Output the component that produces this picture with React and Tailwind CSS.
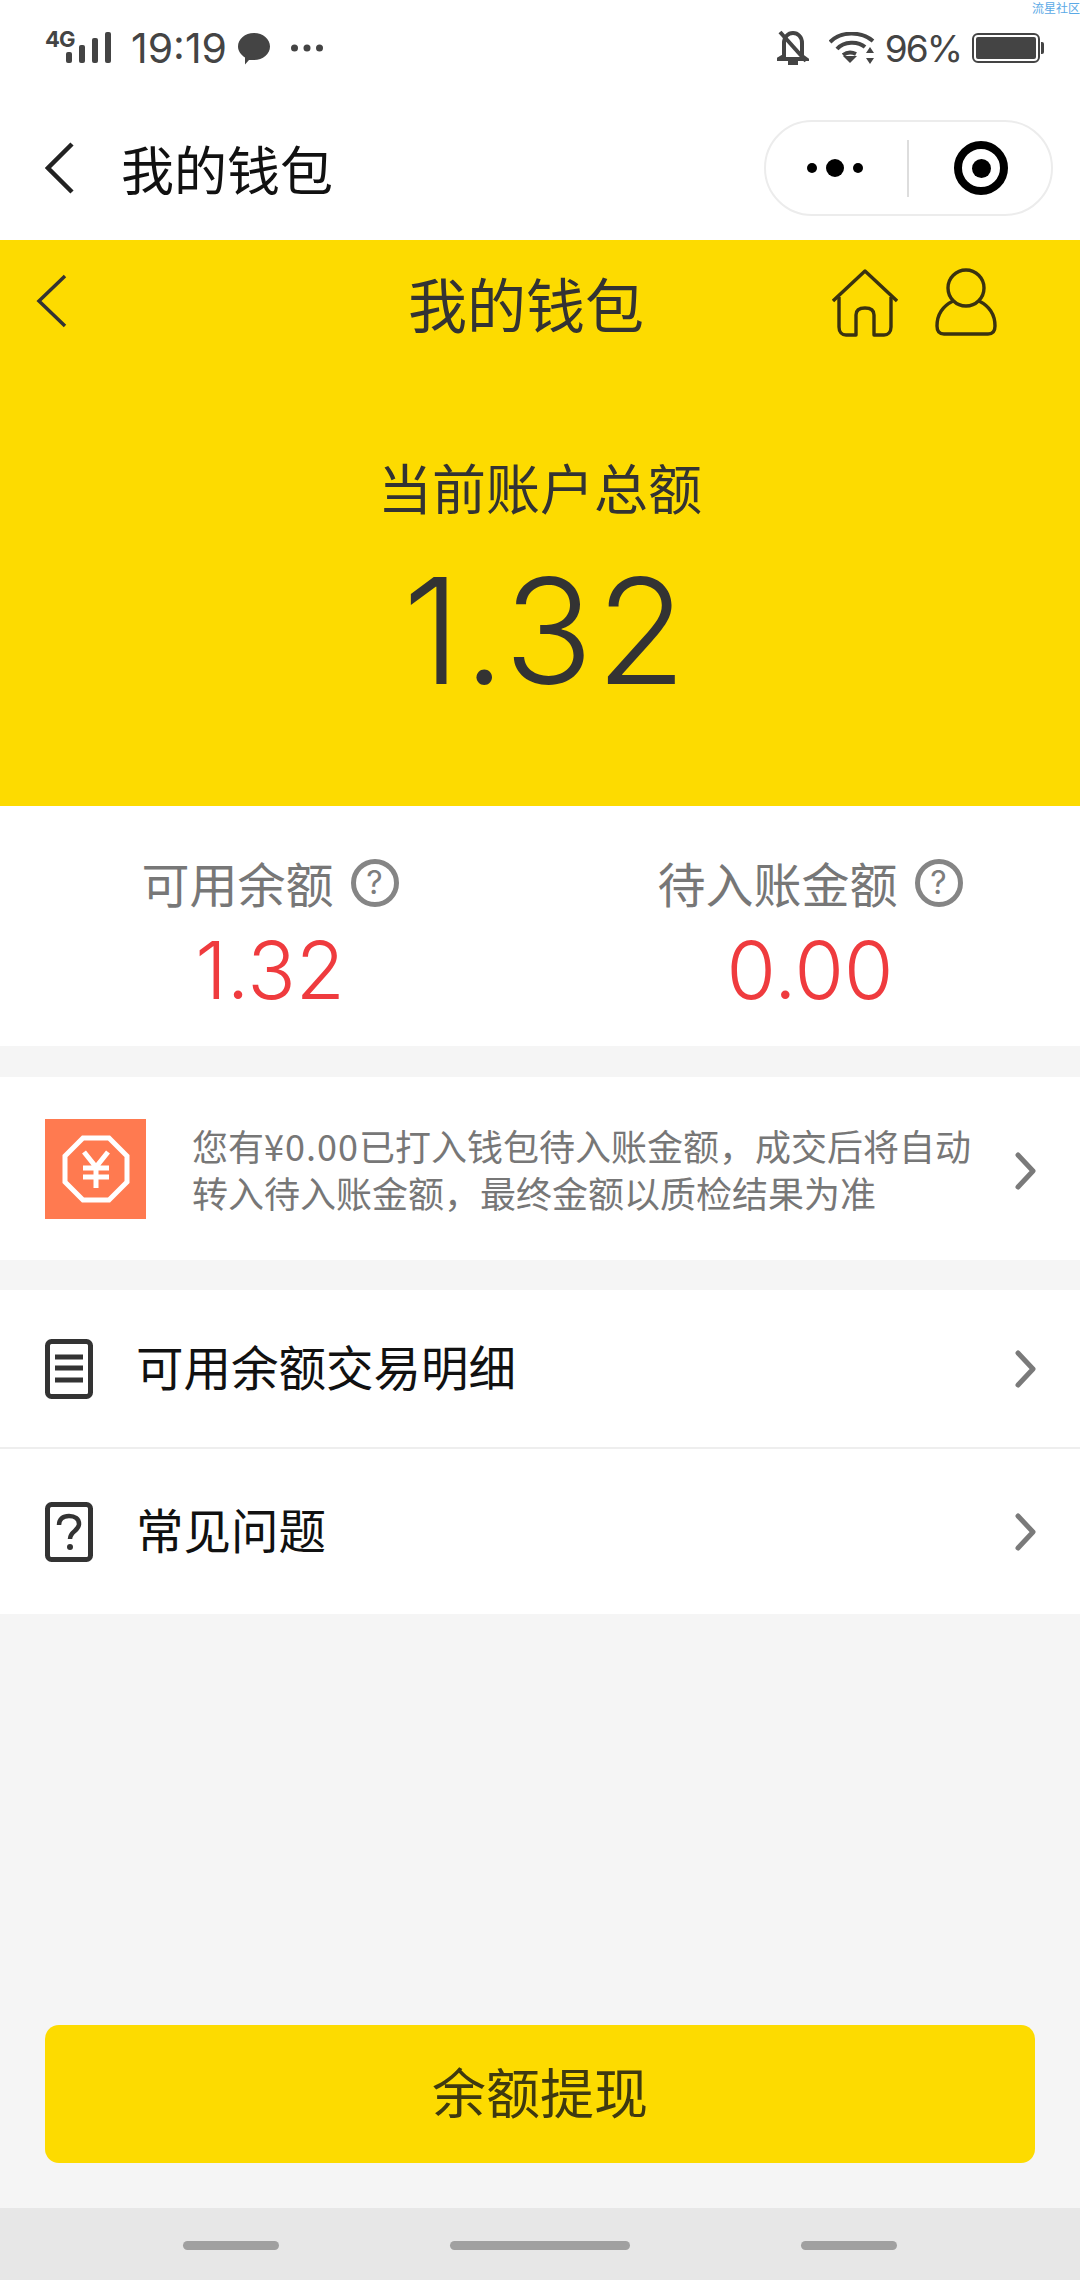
import React from "react";

const cjk = { fontFamily: '"Noto Sans CJK SC", "Liberation Sans", sans-serif' };
const Chevron = () => (
  <svg width="24" height="38" viewBox="0 0 24 38" fill="none" stroke="#7a7a7a" strokeWidth="5" strokeLinecap="round" strokeLinejoin="round"><path d="M4 3 L19 19 L4 35" /></svg>
);
const Help = () => (
  <span className="mt-[3px] w-[48px] h-[48px] rounded-full border-[5px] border-[#858585] text-[#7d7d7d] flex items-center justify-center text-[32px] font-['Inter'] leading-none">?</span>
);

export default function App() {
  return (
    <div className="w-[1080px] h-[2280px] bg-[#f5f5f5] flex flex-col relative overflow-hidden" style={cjk}>
      <span className="absolute right-[0px] top-[1px] text-[12px] leading-[13px] text-[#5aa9e6]">流星社区</span>
      {/* status bar */}
      <div className="h-[96px] bg-white flex items-center justify-between pl-[45px] pr-[36px] text-[#444] font-['Inter']">
        <div className="flex items-center">
          <div className="relative w-[66px] h-[32px]">
            <span className="absolute left-0 -top-[4px] text-[22px] font-bold leading-[22px] tracking-[-1px]">4G</span>
            <svg className="absolute left-0 top-0" width="66" height="32" viewBox="0 0 66 32" fill="#444"><rect x="21" y="20" width="6" height="11" rx="2"/><rect x="34" y="13" width="6" height="18" rx="2"/><rect x="47" y="6" width="6" height="25" rx="2"/><rect x="60" y="0" width="6" height="31" rx="2"/></svg>
          </div>
          <span className="ml-[20px] text-[41px] leading-none font-normal">19:19</span>
          <svg className="ml-[10px]" width="34" height="33" viewBox="0 0 34 33" fill="#444"><path d="M17 1c9 0 16 6 16 13.5S26 28 17 28c-2 0-3 0-5 0l-4 4.500 0-7C4 23 1 19 1 14.500 1 7 8 1 17 1z"/></svg>
          <svg className="ml-[20px]" width="32" height="8" viewBox="0 0 32 8" fill="#444"><circle cx="3.500" cy="4" r="3.500"/><circle cx="16" cy="4" r="3.500"/><circle cx="28.500" cy="4" r="3.500"/></svg>
        </div>
        <div className="flex items-center">
          <svg width="32" height="36" viewBox="0 0 32 36" fill="none" stroke="#444" strokeWidth="4"><path d="M7 26V13C7 7 11 3 16 3s9 4 9 10v13l4 3H2z"/><path d="M3 2l26 29" /><path d="M11 33h10" strokeWidth="4"/></svg>
          <svg className="ml-[20px]" width="46" height="32" viewBox="0 0 46 32" fill="none" stroke="#444" strokeWidth="4"><path d="M1 10C12 -1 32 -1 44 9M8 17C15 9 29 9 36 15M14 23c4-3 9-3 13-1"/><path d="M21 31l-7-7h14z" fill="#444" stroke="none"/><path d="M41 15l4 6h-8zM41 32l4-6h-8z" fill="#444" stroke="none"/></svg>
          <span className="ml-[10px] text-[37px] leading-none tracking-[-2px]">96%</span>
          <div className="ml-[11px] w-[68px] h-[30px] border-[2px] border-[#444] rounded-[6px] p-[2px]"><div className="w-full h-full bg-[#444] rounded-[2px]"></div></div>
          <div className="w-[3px] h-[12px] bg-[#444] rounded-r-[2px] ml-[1px]"></div>
        </div>
      </div>
      {/* nav */}
      <div className="h-[144px] bg-white flex items-center pl-[45px] pr-[27px]">
        <svg width="30" height="52" viewBox="0 0 30 52" fill="none" stroke="#222" strokeWidth="4.500"><path d="M27 2 L3 26 L27 50" /></svg>
        <span className="ml-[46px] text-[53px] leading-none text-[#111]">我的钱包</span>
        <div className="ml-auto w-[289px] h-[96px] rounded-full border-[2px] border-[#ececec] flex items-center">
          <div className="w-[141px] h-full flex items-center justify-center gap-[9px] pr-[4px]">
            <span className="w-[10px] h-[10px] rounded-full bg-black"></span>
            <span className="w-[18px] h-[18px] rounded-full bg-black"></span>
            <span className="w-[10px] h-[10px] rounded-full bg-black"></span>
          </div>
          <div className="w-[2px] h-[57px] bg-[#ddd]"></div>
          <div className="flex-1 flex items-center justify-center pl-[2px]">
            <div className="w-[54px] h-[54px] rounded-full border-[8px] border-black flex items-center justify-center"><span className="w-[19px] h-[19px] rounded-full bg-black"></span></div>
          </div>
        </div>
      </div>
      {/* yellow */}
      <div className="h-[566px] bg-[#fddb00] flex flex-col text-[#333]">
        <div className="flex items-center h-[120px] pl-[35px] pr-[83px] pt-[10px]">
          <svg width="32" height="54" viewBox="0 0 32 54" fill="none" stroke="#333" strokeWidth="3.500" className="-mt-[8px]"><path d="M30 2 L4 27 L30 52" /></svg>
          <span className="ml-[341px] text-[59px] leading-none -mt-[6px]">我的钱包</span>
          <svg className="ml-auto -mt-[4px]" width="66" height="68" viewBox="0 0 66 68" fill="none" stroke="#3a3210" strokeWidth="3.400" strokeLinejoin="round"><path d="M1 32 L33 2 L65 32"/><path d="M7 28V58c0 5 3 8 7 8h10V46c0-5 4-7 9-7s9 2 9 7v20h10c4 0 7-3 7-8V28"/></svg>
          <svg className="ml-[37px] -mt-[6px]" width="62" height="68" viewBox="0 0 62 68" fill="none" stroke="#3a3210" strokeWidth="3.400"><circle cx="31" cy="20" r="18"/><path d="M18 33C8 38 2 47 2 58c0 5 2 8 7 8h44c5 0 7-3 7-8 0-11-6-20-16-25"/></svg>
        </div>
        <div className="mt-[97px] text-center text-[54px] leading-[60px]">当前账户总额</div>
        <div className="mt-[39px] pl-[12px] text-center text-[147px] leading-[150px] font-['Inter'] font-light tracking-[3px]">1.32</div>
      </div>
      {/* balances */}
      <div className="h-[240px] bg-white flex">
        <div className="w-[540px] flex flex-col items-center pt-[50px]">
          <div className="flex items-center gap-[17px] text-[48px] leading-[50px] text-[#777]">可用余额<Help /></div>
          <div className="mt-[18px] text-[80px] leading-[90px] text-[#ef3b3e] font-['Inter'] font-light">1.32</div>
        </div>
        <div className="w-[540px] flex flex-col items-center pt-[50px]">
          <div className="flex items-center gap-[17px] text-[48px] leading-[50px] text-[#777]">待入账金额<Help /></div>
          <div className="mt-[18px] text-[80px] leading-[90px] text-[#ef3b3e] font-['Inter'] font-light">0.00</div>
        </div>
      </div>
      {/* notice */}
      <div className="mt-[31px] h-[183px] bg-white flex items-center pl-[45px] pr-[42px]">
        <div className="w-[101px] h-[100px] bg-[#ff7a50] flex items-center justify-center">
          <svg width="68" height="68" viewBox="0 0 68 68" fill="none" stroke="#fff"><path d="M21 3h26l18 18v26L47 65H21L3 47V21z" strokeWidth="5"/><path d="M22 17l12 15 12-15M34 32v21M21 33h26M21 42h26" strokeWidth="5"/></svg>
        </div>
        <div className="ml-[46px] w-[790px] text-[36px] leading-[47px] text-[#777]">您有<span className="tracking-[1px]">¥0.00</span>已打入钱包待入账金额，成交后将自动转入待入账金额，最终金额以质检结果为准</div>
        <div className="ml-auto mt-[4px]"><Chevron /></div>
      </div>
      {/* list */}
      <div className="mt-[30px] bg-white">
        <div className="h-[159px] flex items-center pl-[45px] pr-[42px] border-b-[2px] border-[#eeeeee]">
          <svg width="48" height="60" viewBox="0 0 48 60" fill="none" stroke="#333" strokeWidth="5"><rect x="2.500" y="2.500" width="43" height="55" rx="4"/><path d="M10 18h28M10 29h28M10 41h28"/></svg>
          <span className="ml-[43px] text-[47.500px] leading-none text-[#111] -mt-[5px]">可用余额交易明细</span>
          <div className="ml-auto"><Chevron /></div>
        </div>
        <div className="h-[165px] flex items-center pl-[45px] pr-[42px]">
          <svg width="48" height="60" viewBox="0 0 48 60" fill="none" stroke="#333" strokeWidth="5"><rect x="2.500" y="2.500" width="43" height="55" rx="4"/><path d="M14 23c0-6 4-9 10-9s10 3 10 8c0 7-9 7-9 15" strokeWidth="4.500"/><circle cx="25" cy="45" r="3" fill="#333" stroke="none"/></svg>
          <span className="ml-[43px] text-[47.500px] leading-none text-[#111] -mt-[5px]">常见问题</span>
          <div className="ml-auto"><Chevron /></div>
        </div>
      </div>
      {/* button */}
      <div className="flex-1 flex items-end px-[45px] pb-[45px]">
        <div className="w-full h-[138px] bg-[#fddb00] rounded-[14px] flex items-center justify-center text-[54px] leading-none text-[#3f3a10] pb-[6px]">余额提现</div>
      </div>
      {/* android nav */}
      <div className="h-[72px] bg-[#e7e7e7] flex items-start pt-[33px]">
        <div className="ml-[183px] w-[96px] h-[9px] rounded-full bg-[#a0a0a0]"></div>
        <div className="ml-[171px] w-[180px] h-[9px] rounded-full bg-[#a0a0a0]"></div>
        <div className="ml-[171px] w-[96px] h-[9px] rounded-full bg-[#a0a0a0]"></div>
      </div>
    </div>
  );
}
